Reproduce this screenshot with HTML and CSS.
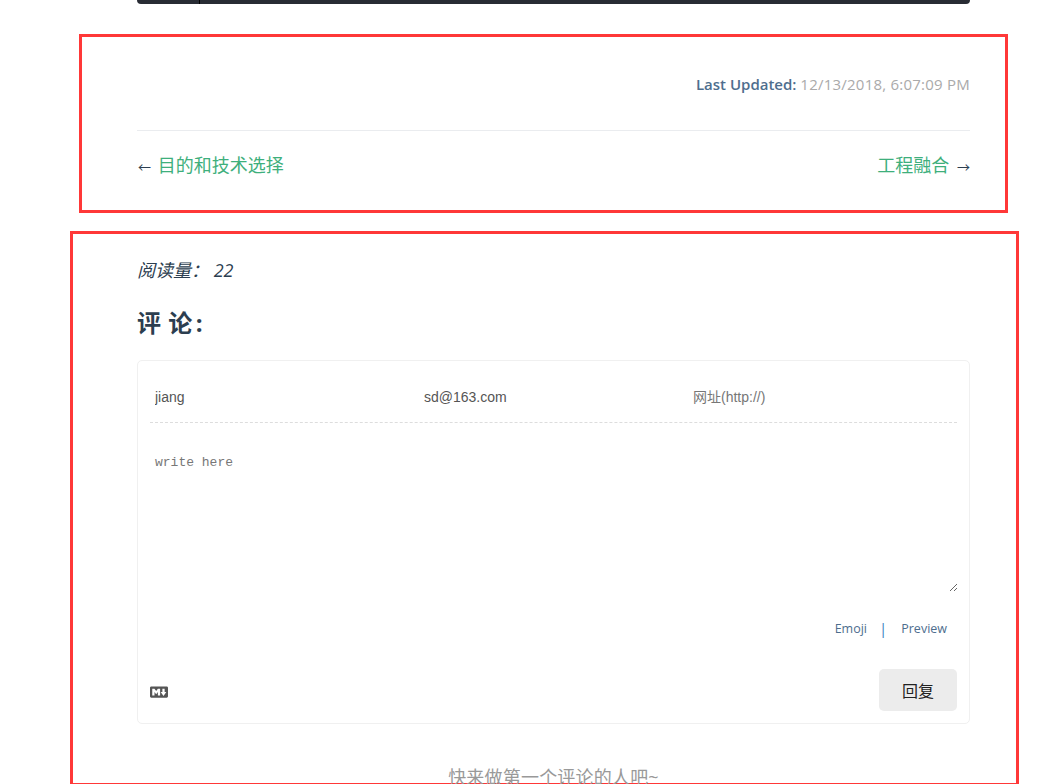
FILE: index.html
```html
<!DOCTYPE html>
<html lang="zh">
<head>
<meta charset="utf-8">
<title>评论</title>
<link rel="stylesheet" href="styles.css">
</head>
<body>
<div class="code-end"><div class="gutter"></div></div>
<section class="box box-top">
  <div class="updated"><span class="updated-label">Last Updated:</span> <span class="updated-time">12/13/2018, 6:07:09 PM</span></div>
  <nav class="pager">
    <span><span class="arrow arrow-prev">←</span> <a href="#">目的和技术选择</a></span>
    <span><a href="#">工程融合</a> <span class="arrow arrow-next">→</span></span>
  </nav>
</section>
<section class="box box-bottom">
  <div class="reads"><em>阅读量：</em> <em>22</em></div>
  <h3 class="title">评 论<span class="title-colon">:</span></h3>
  <form class="card">
    <div class="fields">
      <input class="field" type="text" value="jiang">
      <input class="field" type="text" value="sd@163.com">
      <input class="field" type="text" placeholder="网址(http://)">
    </div>
    <textarea class="editor" placeholder="write here"></textarea>
    <div class="tools"><span>Emoji</span><span class="sep">|</span><span>Preview</span></div>
    <div class="actions">
      <svg class="md" viewBox="0 0 16 16" aria-hidden="true"><path d="M14.85 3H1.15C.52 3 0 3.52 0 4.15v7.69C0 12.48.52 13 1.15 13h13.69c.64 0 1.15-.52 1.15-1.15v-7.7C16 3.52 15.48 3 14.85 3zM9 11H7V8L5.5 9.92 4 8v3H2V5h2l1.5 2L7 5h2v6zm2.99.5L9.5 8H11V5h2v3h1.5l-2.51 3.5z"/></svg>
      <button class="reply" type="button">回复</button>
    </div>
  </form>
  <p class="empty">快来做第一个评论的人吧~</p>
</section>
</body>
</html>
```
FILE: styles.css
```css
* { box-sizing: border-box; }
html, body { height: 784px; overflow: hidden; }
body {
  margin: 0;
  background: #fff;
  color: #2c3e50;
  font-family: "Open Sans", "Noto Sans CJK SC", sans-serif;
  font-size: 16px;
}
.code-end {
  width: 833px;
  height: 4px;
  margin-left: 137px;
  background: #282c34;
  border-radius: 0 0 6px 6px;
}
.gutter {
  width: 1px;
  height: 4px;
  margin-left: 62px;
  background: #000;
}
.box { border: 3px solid #ff3838; }
.box-top {
  width: 929px;
  height: 179px;
  margin: 30px 0 0 79px;
  padding: 32px 35px 0 55px;
}
.updated {
  height: 61px;
  padding-top: 2px;
  text-align: right;
  font-size: 15px;
  line-height: 26px;
}
.updated-label { font-weight: 600; color: #4e6e8e; }
.updated-time { color: #aaa; letter-spacing: 0.23px; }
.pager {
  display: flex;
  justify-content: space-between;
  padding-top: 21px;
  border-top: 1px solid #eaecef;
  font-size: 18px;
  line-height: 26px;
}
.pager a { color: #3eaf7c; text-decoration: none; }
.arrow { font-size: 13px; }
.arrow-prev { margin: 0 2px 0 1px; }
.arrow-next { margin-left: 3px; }
.box-bottom {
  width: 949px;
  height: 555px;
  margin: 18px 0 0 70px;
  padding: 23px 46px 0 64px;
}
.reads { font-size: 18px; line-height: 26px; }
.title {
  margin: 24px 0 21px;
  font-size: 24px;
  line-height: 32px;
  font-weight: 700;
  letter-spacing: 0.5px;
}
.title-colon { margin-left: 3px; }
.card {
  height: 364px;
  padding: 12px;
  border: 1px solid #f0f0f0;
  border-radius: 5px;
}
.fields {
  display: grid;
  grid-template-columns: repeat(3, 1fr);
  height: 50px;
  border-bottom: 1px dashed #ddd;
}
.field {
  min-width: 0;
  height: 47px;
  padding: 0 5px;
  border: 0;
  outline: 0;
  background: transparent;
  color: #555;
  font: 14px "Liberation Sans", "Noto Sans CJK SC", sans-serif;
}
.field::placeholder { color: #777; opacity: 1; }
.editor {
  display: block;
  width: 808px;
  height: 169px;
  margin-top: 0;
  padding: 30px 5px 5px;
  border: 0;
  outline: 0;
  background: transparent;
  color: #555;
  font: 13px/20px "Liberation Mono", monospace;
}
.editor::placeholder { color: #777; opacity: 1; }
.tools {
  display: flex;
  justify-content: flex-end;
  align-items: center;
  gap: 15px;
  height: 20px;
  margin-top: 26px;
  padding-right: 10px;
  font-size: 12.5px;
  color: #4e6e8e;
}
.sep { margin: 0 -1px 0 -3px; color: #3a7fc0; font-size: 15px; }
.actions {
  display: flex;
  justify-content: space-between;
  align-items: center;
  margin-top: 31px;
}
.md { width: 18px; height: 18px; margin-top: 4px; fill: #555; }
.reply {
  width: 78px;
  height: 42px;
  padding: 0;
  border: 0;
  border-radius: 5px;
  background: #ececec;
  color: #222;
  font: 16px "Noto Sans CJK SC", sans-serif;
}
.empty {
  margin: 40px 0 0;
  text-align: center;
  font-size: 18px;
  line-height: 26px;
  letter-spacing: 0.2px;
  color: #999;
}
```
